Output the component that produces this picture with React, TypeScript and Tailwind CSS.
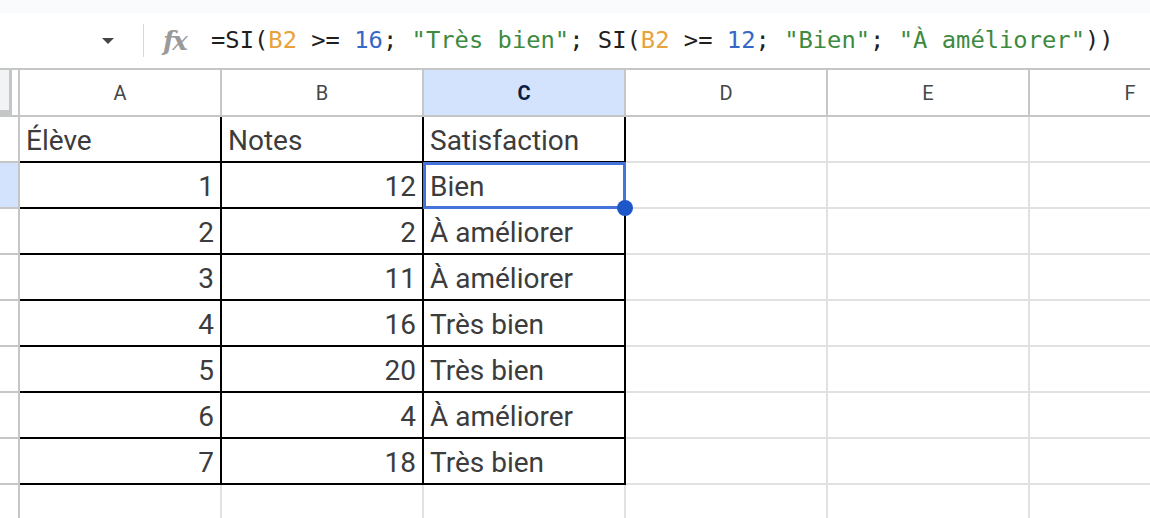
import React from "react";

const rows: { a: string; b: string; c: string; header?: boolean }[] = [
  { a: "Élève", b: "Notes", c: "Satisfaction", header: true },
  { a: "1", b: "12", c: "Bien" },
  { a: "2", b: "2", c: "À améliorer" },
  { a: "3", b: "11", c: "À améliorer" },
  { a: "4", b: "16", c: "Très bien" },
  { a: "5", b: "20", c: "Très bien" },
  { a: "6", b: "4", c: "À améliorer" },
  { a: "7", b: "18", c: "Très bien" },
];

const colLetters = ["A", "B", "C", "D", "E", "F"];

export default function App() {
  return (
    <div className="w-[1150px] h-[518px] overflow-hidden bg-white font-['Roboto',sans-serif]">
      <div className="h-[13px] bg-[#f9fbfd]" />
      <div className="h-[55px] flex items-center">
        <div className="w-[102px]" />
        <div className="w-0 h-0 border-l-[6px] border-r-[6px] border-t-[6px] border-l-transparent border-r-transparent border-t-[#444746]" />
        <div className="w-[29px]" />
        <div className="w-[1px] h-[33px] bg-[#d6d8da]" />
        <div className="w-[19px]" />
        <div className="font-['DejaVu_Serif',serif] italic font-bold text-[26px] text-[#9a9a9a] leading-none w-[48px] tracking-[-2px]">fx</div>
        <div className="font-['DejaVu_Sans_Mono','Liberation_Mono',monospace] text-[23.8px] text-[#1f1f1f] whitespace-pre leading-none">
          <span>=SI(</span>
          <span className="text-[#e8a23c]">B2</span>
          <span> &gt;= </span>
          <span className="text-[#3567c9]">16</span>
          <span>; </span>
          <span className="text-[#3d8a40]">"Très bien"</span>
          <span>; SI(</span>
          <span className="text-[#e8a23c]">B2</span>
          <span> &gt;= </span>
          <span className="text-[#3567c9]">12</span>
          <span>; </span>
          <span className="text-[#3d8a40]">"Bien"</span>
          <span>; </span>
          <span className="text-[#3d8a40]">"À améliorer"</span>
          <span>))</span>
        </div>
      </div>

      {/* column headers */}
      <div className="flex h-[49px] border-y-2 border-[#c4c7c5]">
        <div className="w-[20px] shrink-0 border-r-2 border-[#c4c7c5] flex">
          <div className="w-[12px] h-[45px] bg-[#f1f3f4] border-r-[3px] border-b-[5px] border-[#c4c7c5]" />
        </div>
        {colLetters.map((l) => (
          <div
            key={l}
            className={`w-[202px] shrink-0 border-r-2 border-[#c4c7c5] flex items-center justify-center text-[20px] ${
              l === "C" ? "bg-[#d3e3fd] text-[#0b1d45] font-bold" : "text-[#444746]"
            }`}
          >
            {l}
          </div>
        ))}
      </div>

      {/* data rows */}
      {[...rows, null, null].map((r, i) => {
        const inTable = r !== null;
        const selRow = i === 1;
        const black = "border-black";
        const gray = "border-[#e1e1e1]";
        return (
          <div key={i} className="flex h-[46px]">
            <div
              className={`w-[20px] shrink-0 border-r-2 border-b-2 border-[#c4c7c5] ${
                selRow ? "bg-[#d3e3fd]" : "bg-white"
              }`}
            />
            <div
              className={`w-[202px] shrink-0 border-r-2 border-b-2 ${inTable ? black : gray} flex items-center px-[6px] pt-[3px] text-[28px] text-[#3c3c3c] ${
                r?.header ? "justify-start" : "justify-end"
              }`}
            >
              {r?.a}
            </div>
            <div
              className={`w-[202px] shrink-0 border-r-2 border-b-2 ${inTable ? black : gray} flex items-center px-[6px] pt-[3px] text-[28px] text-[#3c3c3c] ${
                r?.header ? "justify-start" : "justify-end"
              }`}
            >
              {r?.b}
            </div>
            <div
              className={`relative w-[202px] shrink-0 border-r-2 border-b-2 ${inTable ? black : gray} flex items-center px-[6px] pt-[3px] text-[28px] text-[#3c3c3c]`}
            >
              {r?.c}
              {selRow && (
                <>
                  <div className="absolute left-[-1px] top-[-1px] right-[-2px] bottom-[-2px] border-[3px] border-[#4573dc]" />
                  <div className="absolute right-[-9px] bottom-[-9px] w-[16px] h-[16px] rounded-full bg-[#1f57c9] z-10" />
                </>
              )}
            </div>
            <div className={`w-[202px] shrink-0 border-r-2 border-b-2 ${gray}`} />
            <div className={`w-[202px] shrink-0 border-r-2 border-b-2 ${gray}`} />
            <div className={`w-[202px] shrink-0 border-r-2 border-b-2 ${gray}`} />
          </div>
        );
      })}
    </div>
  );
}
